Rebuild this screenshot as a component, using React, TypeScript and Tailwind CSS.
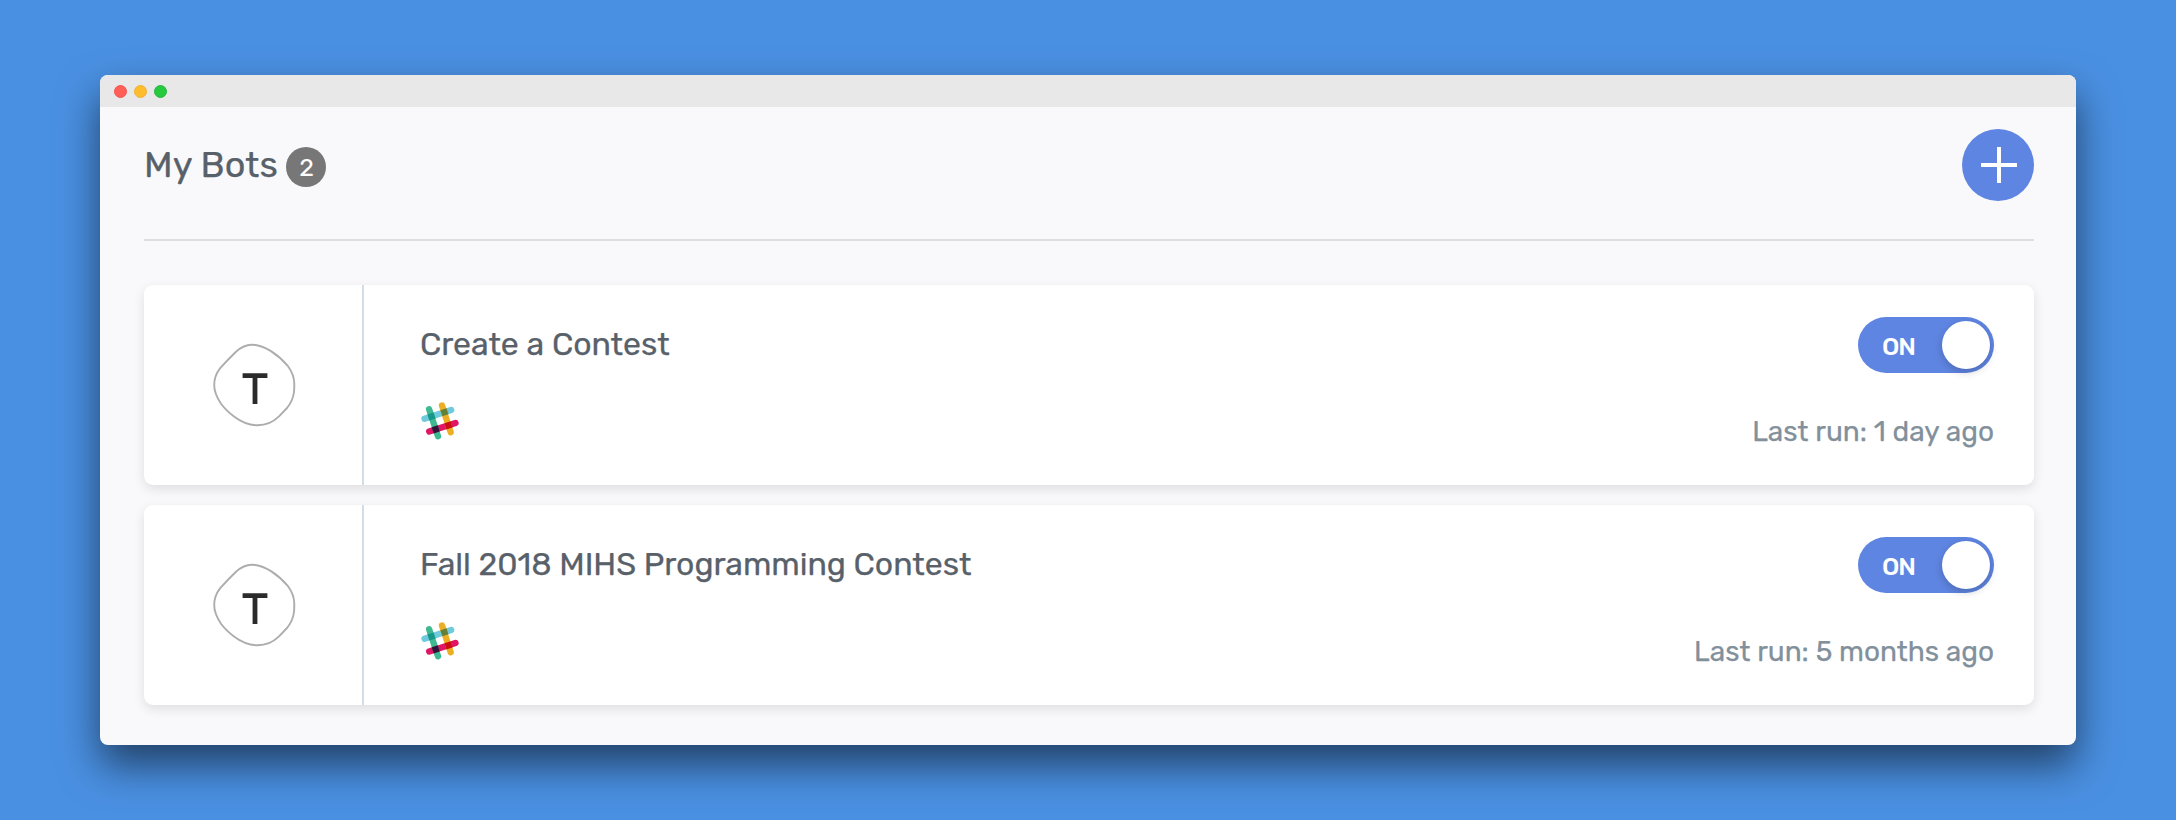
type Bot = { name: string; lastRun: string };

const bots: Bot[] = [
  { name: "Create a Contest", lastRun: "1 day ago" },
  { name: "Fall 2018 MIHS Programming Contest", lastRun: "5 months ago" },
];

function Avatar() {
  return (
    <svg viewBox="0 0 84 84" className="h-[84px] w-[84px]" fill="none">
      <path
        d="M38.7 1.7C46 1.7 52.500 4.800 58 8.100C64 12 70 17.200 75 23.200C79.700 29.500 81.300 35 81.300 41C81.300 44 81.300 46 81 49C80.300 55 78 60 74 65L66 73.400C59.500 79.700 52 82.300 44.700 82.300C36 82.300 28 78.800 21 73.500C15.500 69.200 11.500 65.500 8 60.700C3.500 54 1.200 49 1.200 42C1.200 36 3.300 30.200 7.200 25.200C12 19.700 17.500 14 23 8.700C28 4.200 32 1.700 38.700 1.700Z"
        stroke="#adadad"
        strokeWidth="1.9"
      />
      <path d="M32 32.700H52M42 32.700V58.700" stroke="#2b2b2b" strokeWidth="4.800" strokeLinecap="square" />
    </svg>
  );
}

const crossings = [
  { x: 10.5, y: 14.5, fill: "#16978a" },
  { x: 23.4, y: 10.3, fill: "#63803a" },
  { x: 14.7, y: 27.4, fill: "#361238" },
  { x: 27.5, y: 23.4, fill: "#cb0e13" },
];

function SlackLogo() {
  return (
    <svg viewBox="0 0 38 38" className="h-[38px] w-[38px] overflow-visible" fill="none">
      <g strokeWidth="6.300" strokeLinecap="round">
        <path d="M3.500 16.700L30.200 8" stroke="#6ecadc" />
        <path d="M8.200 29.600L34.500 21" stroke="#e01563" />
        <path d="M8.100 7.300L17 34.200" stroke="#3eb991" />
        <path d="M21 3.500L29.700 30.300" stroke="#ecaf23" />
      </g>
      {crossings.map((c) => (
        <rect
          key={c.fill}
          x={c.x - 3.2}
          y={c.y - 3.2}
          width="6.400"
          height="6.400"
          fill={c.fill}
          transform={`rotate(-18 ${c.x} ${c.y})`}
        />
      ))}
    </svg>
  );
}

function Toggle() {
  return (
    <button className="flex h-14 w-[136px] items-center justify-between rounded-full bg-[#5f85e2] pl-6 pr-1">
      <span className="pt-0.5 text-[25px] font-medium leading-none tracking-[-1.2px] text-white">ON</span>
      <span className="h-12 w-12 rounded-full bg-white shadow-[0_3px_8px_rgba(0,0,0,0.2)]" />
    </button>
  );
}

function BotCard({ bot }: { bot: Bot }) {
  return (
    <article className="flex h-[200px] rounded-[9px] bg-white shadow-[0_4px_12px_rgba(0,0,0,0.11)]">
      <div className="flex w-[220px] items-center border-r-2 border-[#d3dde6] pl-[69px]">
        <Avatar />
      </div>
      <div className="flex flex-1 justify-between pl-14 pr-10">
        <div className="flex flex-col pt-[38px]">
          <h2 className="text-[32px] leading-[42px] tracking-[-0.05px] text-[#58616a] [-webkit-text-stroke:0.25px]">
            {bot.name}
          </h2>
          <div className="pl-px pt-[37px]">
            <SlackLogo />
          </div>
        </div>
        <div className="flex flex-col items-end pt-8">
          <Toggle />
          <p className="pt-[41px] text-[28px] leading-9 tracking-[-0.02px] text-[#82909c] [-webkit-text-stroke:0.25px]">
            Last run: {bot.lastRun}
          </p>
        </div>
      </div>
    </article>
  );
}

export default function App() {
  return (
    <div className="h-[820px] w-[2176px] overflow-hidden bg-[#4a90e2] px-[100px] pt-[75px] font-['Rubik','Roboto',sans-serif]">
      <div className="h-[670px] rounded-lg bg-[#f9f9fb] shadow-[0_20px_40px_rgba(0,0,0,0.55)]">
        <div className="flex h-8 items-center gap-[7px] rounded-t-lg bg-[#e8e8e8] pl-[13.5px] pt-px">
          <span className="h-[13px] w-[13px] rounded-full border border-[#f5544d] bg-[#ff5f57]" />
          <span className="h-[13px] w-[13px] rounded-full border border-[#efb033] bg-[#ffbd2e]" />
          <span className="h-[13px] w-[13px] rounded-full border border-[#24b93c] bg-[#27c93f]" />
        </div>
        <main className="pl-11 pr-[42px]">
          <header className="flex h-[134px] items-start justify-between border-b-2 border-[#dedfe1] pt-[22px]">
            <div className="flex items-center">
              <h1 className="text-[36px] leading-[72px] tracking-[0.1px] text-[#58616a] [-webkit-text-stroke:0.25px]">
                My Bots
              </h1>
              <span className="ml-2 mt-1 flex h-10 w-10 items-center justify-center rounded-full bg-[#777777] pl-px text-[25px] leading-none text-white">
                2
              </span>
            </div>
            <button className="flex h-[72px] w-[72px] items-center justify-center rounded-full bg-[#5f85e2]" aria-label="Add bot">
              <svg viewBox="0 0 36 36" className="ml-0.5 h-9 w-9" stroke="#fff" strokeWidth="4">
                <path d="M0 18H36M18 0V36" />
              </svg>
            </button>
          </header>
          <section className="flex flex-col gap-5 pt-11">
            {bots.map((bot) => (
              <BotCard key={bot.name} bot={bot} />
            ))}
          </section>
        </main>
      </div>
    </div>
  );
}
